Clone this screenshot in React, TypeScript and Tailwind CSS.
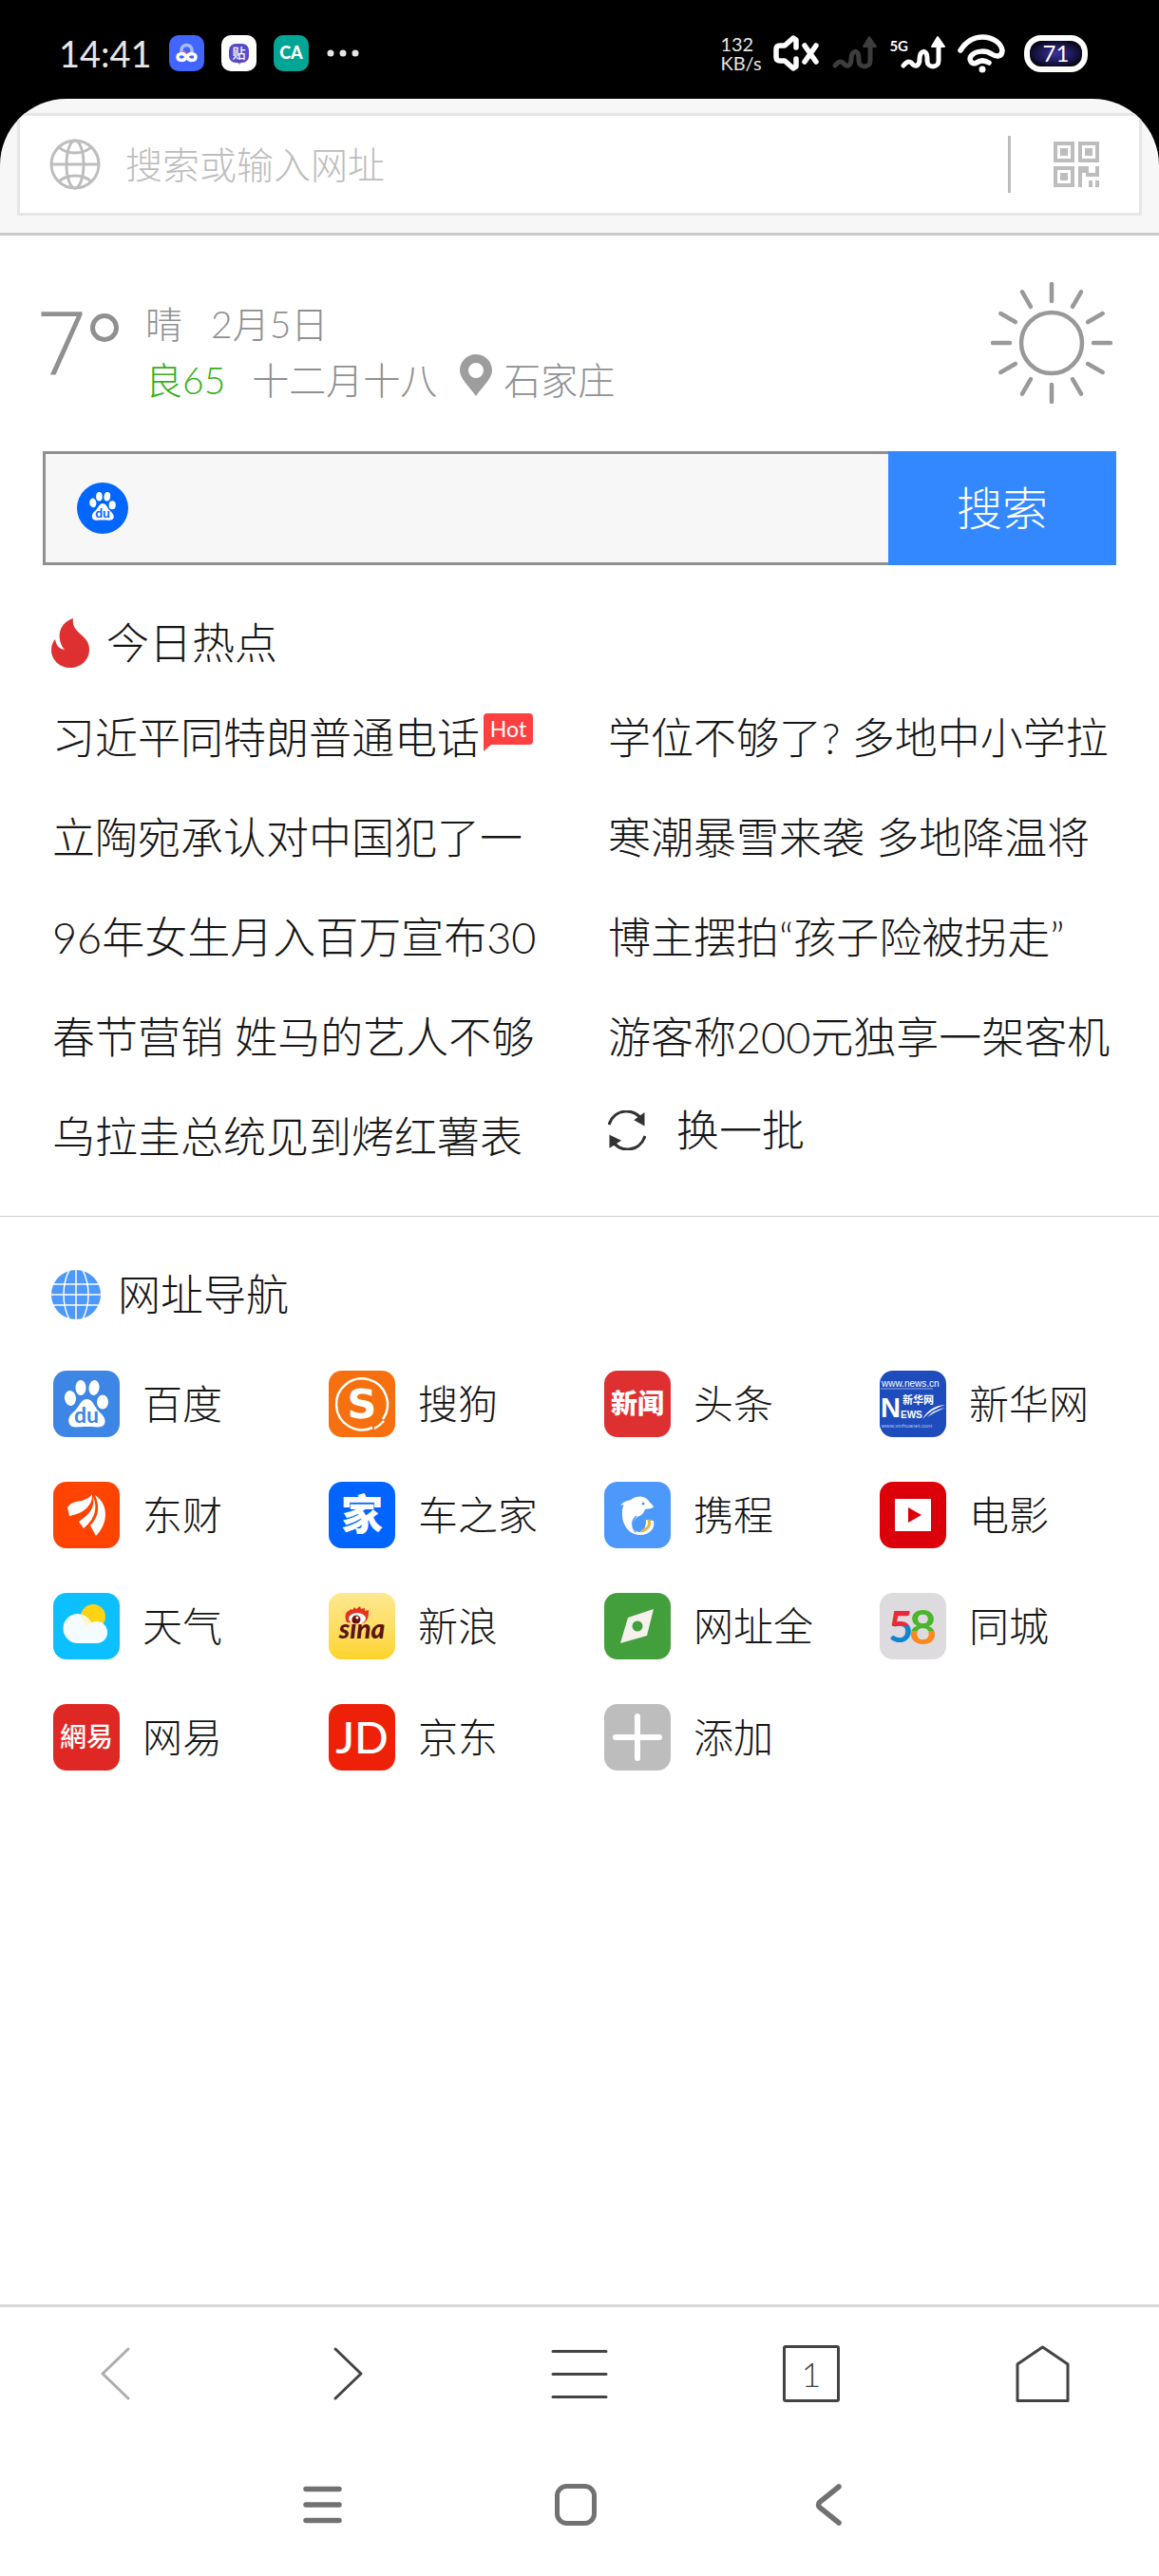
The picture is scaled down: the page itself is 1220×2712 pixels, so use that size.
import type { ReactNode } from "react";

type Site = {
  name: string;
  bg: string;
  icon: ReactNode;
};

const hotLeft = [
  "习近平同特朗普通电话",
  "立陶宛承认对中国犯了一",
  "96年女生月入百万宣布30",
  "春节营销 姓马的艺人不够",
  "乌拉圭总统见到烤红薯表",
];

const hotRight = [
  "学位不够了? 多地中小学拉",
  "寒潮暴雪来袭 多地降温将",
  "博主摆拍“孩子险被拐走”",
  "游客称200元独享一架客机",
];

function Paw({ textColor }: { textColor: string }) {
  return (
    <>
      <g fill="#fff">
        <ellipse cx="18" cy="29" rx="6" ry="8" transform="rotate(-8 18 29)" />
        <ellipse cx="29" cy="18" rx="5.5" ry="8" />
        <ellipse cx="43" cy="18" rx="5.5" ry="8" transform="rotate(8 43 18)" />
        <ellipse cx="52" cy="33" rx="6" ry="7.5" />
        <path d="M35 30c7 0 8 8 13 13 5 4 8 9 6 13-2 5-9 3-19 3s-16 2-18-3c-2-5 0-9 5-13s7-13 13-13z" />
      </g>
      <text x="35" y="55" textAnchor="middle" fontSize="23" fontFamily="Lato" fontWeight="700" fill={textColor}>
        du
      </text>
    </>
  );
}

const sites: Site[] = [
  { name: "百度", bg: "bg-[#3d86e6]", icon: <Paw textColor="#3d86e6" /> },
  {
    name: "搜狗",
    bg: "bg-[#f77010]",
    icon: (
      <>
        <path d="M46 60A27 27 0 1 1 57 51" fill="none" stroke="#fff" strokeWidth="2.5" />
        <path d="M48 61Q54 58 58 53" fill="none" stroke="#fff" strokeWidth="2.5" />
        <text x="35" y="50" textAnchor="middle" fontSize="43" fontFamily="DejaVu Sans" fontWeight="700" fill="#fff">
          S
        </text>
      </>
    ),
  },
  {
    name: "头条",
    bg: "bg-[#df3031]",
    icon: (
      <text x="35" y="45" textAnchor="middle" fontSize="28" fontFamily="Noto Sans CJK SC" fontWeight="900" fill="#fff">
        新闻
      </text>
    ),
  },
  {
    name: "新华网",
    bg: "bg-[#1f4cbd]",
    icon: (
      <g fill="#fff" fontFamily="Liberation Sans">
        <text x="2" y="17" fontSize="10">www.news.cn</text>
        <path d="M1 19h55" stroke="#8fa8e4" />
        <text x="1" y="49" fontSize="29" fontWeight="700">N</text>
        <text x="24" y="35" fontSize="11" fontWeight="700" fontFamily="Noto Sans CJK SC">新华网</text>
        <text x="22" y="50" fontSize="10" fontWeight="700">EWS</text>
        <path d="M45 51Q53 37 69 36Q55 40 45 51zM50 49Q57 41 69 39Q59 43 50 49z" />
        <text x="2" y="60" fontSize="6" fill="#b9c8ef">www.xinhuanet.com</text>
      </g>
    ),
  },
  {
    name: "东财",
    bg: "bg-[#ff4300]",
    icon: (
      <g fill="#fff">
        <path d="M41 13c1 9-6 20-24 23l-2-9c4-6 9-6 15-7 6-2 9-4 11-7z" />
        <path d="M42 16c6 13 0 25-10 33l-5-7C38 34 44 28 42 16z" />
        <path d="M44 14c15 10 14 30 1 43l-6-11c8-8 11-18 5-32z" />
      </g>
    ),
  },
  {
    name: "车之家",
    bg: "bg-[#0264ff]",
    icon: (
      <text x="35" y="51" textAnchor="middle" fontSize="44" fontFamily="Noto Sans CJK SC" fontWeight="900" fill="#fff">
        家
      </text>
    ),
  },
  {
    name: "携程",
    bg: "bg-[#4d98fb]",
    icon: (
      <>
        <path
          d="M17 25c4-5 8-5 11-6 7-5 14-4 18 0 1 2 4 4 6 7-1 3-6 2-9 3-2 7-7 7-8 8-8 6-5 14 1 16 6 0 8-6 8-13l8 1c2 8-4 15-14 15-13 0-20-12-19-25 0-4 2-5 1-7z"
          fill="#fff"
        />
        <path d="M47 40c2 6-1 10-8 12" fill="none" stroke="#e9b43a" strokeWidth="3" />
        <path d="M34 36c-6 5-5 12-1 17" fill="none" stroke="#4d98fb" strokeWidth="1.500" />
        <circle cx="41" cy="23" r="1.500" fill="#4d98fb" />
      </>
    ),
  },
  {
    name: "电影",
    bg: "bg-[#dc000a]",
    icon: (
      <>
        <rect x="16" y="18" width="38" height="34" fill="#fff" />
        <path d="M30 27v16l14-8z" fill="#dc000a" />
      </>
    ),
  },
  {
    name: "天气",
    bg: "bg-[#0cbfff]",
    icon: (
      <>
        <circle cx="42" cy="25" r="13" fill="#fdd314" />
        <path d="M26 22a16 16 0 0 1 14 9.500 11.500 11.500 0 1 1 5 21.500H26a15.500 15.500 0 0 1 0-31z" fill="#f4fcff" />
        <path d="M29 23q9 3 11 8-3 1-4 4-6-4-7-12z" fill="#fff6cd" />
      </>
    ),
  },
  {
    name: "新浪",
    bg: "bg-linear-to-b from-[#fee88e] to-[#fdd423]",
    icon: (
      <>
        <path d="M19 31c-3-7-1-11 2-12l2-2 2 1 2-3 2 2 4-3 1 3 4-1v3l4-1c0 6 0 11-6 14z" fill="#e6321e" />
        <ellipse cx="30" cy="27" rx="9" ry="6" fill="#fff" />
        <circle cx="29" cy="28" r="4.500" fill="#7c130c" />
        <circle cx="30" cy="26" r="1.500" fill="#fff" />
        <text x="35" y="48" textAnchor="middle" fontSize="28" fontFamily="Lato" fontStyle="italic" fontWeight="900" fill="#5c140b">
          sina
        </text>
      </>
    ),
  },
  {
    name: "网址全",
    bg: "bg-[#439f3b]",
    icon: (
      <>
        <path d="M52 17l-7 28-28 8 8-27z" fill="#f5f1ec" />
        <circle cx="35" cy="35" r="5.500" fill="#439f3b" />
      </>
    ),
  },
  {
    name: "同城",
    bg: "bg-[#dedbdf]",
    icon: (
      <>
        <defs>
          <linearGradient id="five" x1="0" y1="0" x2="0" y2="1">
            <stop offset="50%" stopColor="#ea2a3a" />
            <stop offset="50%" stopColor="#0d85d0" />
          </linearGradient>
          <linearGradient id="eight" x1="0" y1="0" x2="0" y2="1">
            <stop offset="58%" stopColor="#4cb52b" />
            <stop offset="58%" stopColor="#f98a1f" />
          </linearGradient>
        </defs>
        <g fontFamily="Lato" fontWeight="700">
          <text x="9" y="52" fontSize="45" fill="url(#five)">5</text>
          <text x="31" y="54" fontSize="50" fill="url(#eight)">8</text>
        </g>
      </>
    ),
  },
  {
    name: "网易",
    bg: "bg-[#df2823]",
    icon: (
      <text x="35" y="45" textAnchor="middle" fontSize="28" fontFamily="Noto Sans CJK TC" fontWeight="500" fill="#fff">
        網易
      </text>
    ),
  },
  {
    name: "京东",
    bg: "bg-[#ee2108]",
    icon: (
      <text x="35" y="52" textAnchor="middle" fontSize="47" fontFamily="Lato" fontWeight="500" fill="#fff">
        JD
      </text>
    ),
  },
  {
    name: "添加",
    bg: "bg-[#bdbdbd]",
    icon: <path d="M12 35h46M35 13v44" stroke="#fff" strokeWidth="6" strokeLinecap="round" />,
  },
];

function Signal({ color }: { color: string }) {
  return (
    <svg viewBox="0 0 48 40" className="h-10 w-12">
      <path
        d="M3 33c5-6 8-4 10-1 4 3 7 0 7-6 0-10 8-10 8-1v3c0 8 12 8 12 0V12"
        fill="none"
        stroke={color}
        strokeWidth="5"
        strokeLinecap="round"
      />
      <path d="M39 3l-6 10h13z" fill={color} stroke={color} strokeWidth="2" strokeLinejoin="round" />
    </svg>
  );
}

function StatusBar() {
  return (
    <div className="flex h-[104px] items-center justify-between bg-black pt-2 pr-[75px] pl-[62px] text-white">
      <div className="flex items-center gap-[18px]">
        <span className="text-[38px] leading-10 font-normal text-[#e6e6e6]">14:41</span>
        <svg viewBox="0 0 37 38" className="h-[38px] w-[37px]">
          <rect width="37" height="38" rx="10" fill="#4265ff" />
          <path d="M13 18v-2a5.500 5.500 0 0 1 11 0v2" fill="none" stroke="#a9bcff" strokeWidth="3.500" />
          <circle cx="16" cy="19" r="2.500" fill="#e35a8c" />
          <path d="M18.500 23c-3-5-9.500-4-9.500 0s6.500 5 9.500 0 9.500-4 9.500 0-6.500 5-9.500 0z" fill="none" stroke="#fff" strokeWidth="3.500" />
        </svg>
        <svg viewBox="0 0 37 38" className="h-[38px] w-[37px]">
          <rect width="37" height="38" rx="10" fill="#fff" />
          <path d="M16 28l3 3 3-3z" fill="#8f83f0" />
          <rect x="8" y="9" width="21" height="20" rx="7" fill="#574ac9" />
          <text x="18.500" y="24" textAnchor="middle" fontSize="14" fontFamily="Noto Sans CJK SC" fontWeight="500" fill="#fff">
            贴
          </text>
        </svg>
        <svg viewBox="0 0 37 38" className="h-[38px] w-[37px]">
          <rect width="37" height="38" rx="10" fill="#03a594" />
          <text x="18.500" y="25" textAnchor="middle" fontSize="18" fontFamily="Lato" fontWeight="900" fill="#fff">
            CA
          </text>
        </svg>
        <svg viewBox="0 0 36 8" className="h-2 w-9" fill="#e6e6e6">
          <circle cx="5" cy="4" r="3.500" />
          <circle cx="18" cy="4" r="3.500" />
          <circle cx="31" cy="4" r="3.500" />
        </svg>
      </div>
      <div className="flex items-center gap-3">
        <div className="flex w-[44px] flex-col text-[20px] leading-5 font-normal whitespace-nowrap text-[#e6e6e6]">
          <span>132</span>
          <span>KB/s</span>
        </div>
        <svg viewBox="0 0 50 40" className="h-10 w-[50px]" fill="none" stroke="#fff" strokeWidth="5.500" strokeLinecap="round" strokeLinejoin="round">
          <path d="M24 14V6l-3-2-9 8H7q-4 0-4 4v8q0 4 4 4h5l9 8 3-2v-8" />
          <path d="M33 12l12 17M45 12L33 29" />
        </svg>
        <Signal color="#3d3d3d" />
        <div className="flex">
          <span className="-mr-2 mt-1 text-[15px] leading-4 font-bold">5G</span>
          <Signal color="#fff" />
        </div>
        <svg viewBox="0 0 50 42" className="h-[42px] w-[50px]">
          <path
            d="M3 18C10 7 18 4 26 4c12 0 20 7 21 14 0 7-6 7-11 4-6-4-16-4-21 1s1 11 5 8 8-3 13 0"
            fill="none"
            stroke="#fff"
            strokeWidth="5.500"
            strokeLinecap="round"
          />
          <circle cx="26" cy="38" r="3.500" fill="#fff" />
        </svg>
        <div className="ml-2 flex h-[39px] w-[67px] items-center justify-center rounded-[18px] border-[6px] border-white bg-[radial-gradient(#3a329c,#14113d_60%,#000_85%)] text-[24px] leading-6 font-normal">
          71
        </div>
      </div>
    </div>
  );
}

function AddressBar() {
  return (
    <div className="bg-black">
      <header className="overflow-hidden rounded-t-[70px] border-b-[3px] border-[#ccc] bg-[#f7f7f7] px-[18px] pt-[15px] pb-[18px]">
        <div className="flex h-[108px] items-center border-[3px] border-[#e6e6e6] bg-white pr-[42px] pl-[31px]">
          <svg viewBox="0 0 54 54" className="size-[54px]" fill="none" stroke="#bdbdbd" strokeWidth="3">
            <circle cx="27" cy="27" r="25" />
            <ellipse cx="27" cy="27" rx="9" ry="25" />
            <path d="M2 27h50M10 9c9 8 25 8 34 0M10 45c9-8 25-8 34 0" />
          </svg>
          <input
            aria-label="搜索或输入网址"
            placeholder="搜索或输入网址"
            className="ml-[26px] min-w-0 flex-1 text-[39px] leading-[60px] outline-none placeholder:text-[#bdbdbd]"
          />
          <div className="h-[60px] w-[3px] bg-[#bdbdbd]" />
          <button type="button" aria-label="扫一扫" className="ml-[45px]">
            <svg viewBox="0 0 48 48" className="size-12" fill="#bdbdbd">
              <path fillRule="evenodd" d="M0 0h22v22H0zM4 4v14h14V4zM26 0h22v22H26zM30 4v14h14V4zM0 26h22v22H0zM4 30v14h14V30z" />
              <path d="M7 7h8v8H7zM33 7h8v8h-8zM7 33h8v8H7zM26 26h11v7h7v-7h4v11H34v-4h-4v15h-4zM37 41h4v7h-4zM44 41h4v7h-4z" />
            </svg>
          </button>
        </div>
      </header>
    </div>
  );
}

function Weather() {
  return (
    <section className="flex items-center pt-12 pr-[45px] pl-10 text-[39px] leading-[59px] text-[#8f9092]">
      <div className="font-[Roboto,sans-serif] text-[92px] leading-[118px]">7</div>
      <svg viewBox="0 0 30 30" className="ml-1 mb-9 size-[30px]">
        <circle cx="15" cy="15" r="12.500" fill="none" stroke="#8f9092" strokeWidth="5" />
      </svg>
      <div className="mt-4 ml-7 flex-1">
        <div className="flex gap-[30px]">
          <span>晴</span>
          <span>2月5日</span>
        </div>
        <div className="flex items-center">
          <span className="text-[#35b01c]">良65</span>
          <span className="ml-7">十二月十八</span>
          <svg viewBox="0 0 34 44" className="mr-3 mb-3 ml-6 h-11 w-[34px]">
            <path fillRule="evenodd" fill="#9d9d9d" d="M17 0c10 0 17 8 17 17 0 8-9 16-17 27C9 33 0 25 0 17 0 8 7 0 17 0zm0 9a8 8 0 1 0 0 16 8 8 0 0 0 0-16z" />
          </svg>
          <span>石家庄</span>
        </div>
      </div>
      <svg viewBox="-64 -64 128 128" className="mr-1 mb-1 size-32" fill="none" stroke="#999" strokeWidth="4.500" strokeLinecap="round">
        <circle r="32" />
        {[0, 30, 60, 90, 120, 150, 180, 210, 240, 270, 300, 330].map((deg) => (
          <path key={deg} d="M0-62v18" transform={`rotate(${deg})`} />
        ))}
      </svg>
    </section>
  );
}

function SearchBox() {
  return (
    <form className="mx-[45px] mt-[45px] flex h-[120px]" onSubmit={(e) => e.preventDefault()}>
      <div className="flex min-w-0 flex-1 items-center border-[3px] border-r-0 border-[#8f9092] bg-[#f7f7f7] pl-[33px]">
        <svg viewBox="0 0 54 54" className="size-[54px]">
          <circle cx="27" cy="27" r="27" fill="#0266ff" />
          <g transform="translate(6 4) scale(.6)">
            <Paw textColor="#0266ff" />
          </g>
        </svg>
        <input aria-label="百度搜索" className="ml-5 min-w-0 flex-1 bg-transparent text-[39px] outline-none" />
      </div>
      <button type="submit" className="w-60 bg-[#3388ff] text-[48px] text-white">
        搜索
      </button>
    </form>
  );
}

function HotNews() {
  return (
    <section className="border-b border-[#ccc] pt-[52px] pb-[30px] text-[45px]">
      <h2 className="flex items-center px-[54px] leading-[60px]">
        <svg viewBox="0 0 40 52" className="mr-[18px] h-[52px] w-10">
          <path
            d="M23 0c-1 8 2 11 7 16 6 5 10 9 10 17 0 11-9 19-20 19S0 44 0 33c0-5 2-9 4-11 1 6 4 10 10 11C5 22 7 5 23 0z"
            fill="#df3031"
          />
        </svg>
        今日热点
      </h2>
      <div className="mt-[18px] grid grid-cols-2 gap-x-[60px] px-[55px] leading-[105px] whitespace-nowrap">
        <ul>
          {hotLeft.map((title, index) => (
            <li key={title} className="flex">
              <a href="#">{title}</a>
              {index === 0 && (
                <span className="relative mt-[26px] ml-1 h-[33px] w-[52px] rounded-[4px] bg-[#ff4040] text-center text-[23px] leading-[32px] font-normal text-white">
                  Hot
                  <svg viewBox="0 0 8 10" className="absolute -bottom-[7px] left-0 h-[10px] w-2">
                    <path d="M0 0h8v3L0 10z" fill="#ff4040" />
                  </svg>
                </span>
              )}
            </li>
          ))}
        </ul>
        <ul>
          {hotRight.map((title) => (
            <li key={title}>
              <a href="#">{title}</a>
            </li>
          ))}
          <li>
            <button type="button" className="flex items-center gap-8 leading-[90px]">
              <svg viewBox="0 0 40 42" className="h-[42px] w-10" fill="none" stroke="#333" strokeWidth="3">
                <path d="M1 15C7-3 29-3 36 11M39 27C33 45 11 45 4 31" />
                <path d="M37 14l-7-4 7-5zM3 28l8 4-8 5z" fill="#333" />
              </svg>
              换一批
            </button>
          </li>
        </ul>
      </div>
    </section>
  );
}

function SiteNav() {
  return (
    <section className="pt-[52px]">
      <h2 className="flex items-center px-[54px] text-[45px] leading-[60px]">
        <svg viewBox="0 0 52 52" className="mr-[18px] size-[52px]">
          <circle cx="26" cy="26" r="26" fill="#4d98fb" />
          <path
            d="M26 0v52M0 26h52M2 15h48M2 37h48M19 0c-8 16-8 36 0 52M33 0c8 16 8 36 0 52"
            fill="none"
            stroke="#fff"
            strokeWidth="1.500"
          />
        </svg>
        网址导航
      </h2>
      <div className="mt-[50px] grid grid-cols-4 gap-x-[52px] gap-y-[47px] px-14">
        {sites.map((site) => (
          <a key={site.name} href="#" className="flex items-center gap-6 text-[42px] leading-[70px] whitespace-nowrap">
            <svg viewBox="0 0 70 70" className={`size-[70px] shrink-0 rounded-[14px] ${site.bg}`}>
              {site.icon}
            </svg>
            {site.name}
          </a>
        ))}
      </div>
    </section>
  );
}

function Toolbar() {
  return (
    <nav className="grid h-[143px] grid-cols-5 border-t-[3px] border-[#d8d8d8]">
      <button type="button" aria-label="后退" className="flex items-center justify-center">
        <svg viewBox="0 0 60 60" className="size-[60px]" fill="none" stroke="#adadad" strokeWidth="3" strokeLinecap="round" strokeLinejoin="round">
          <path d="M43 4L16 30l27 26" />
        </svg>
      </button>
      <button type="button" aria-label="前进" className="flex items-center justify-center">
        <svg viewBox="0 0 60 60" className="size-[60px]" fill="none" stroke="#434343" strokeWidth="3" strokeLinecap="round" strokeLinejoin="round">
          <path d="M17 4l27 26-27 26" />
        </svg>
      </button>
      <button type="button" aria-label="菜单" className="flex items-center justify-center">
        <svg viewBox="0 0 60 60" className="size-[60px]" stroke="#434343" strokeWidth="3" strokeLinecap="round">
          <path d="M2 6.500h56M2 30.500h56M2 54.500h56" />
        </svg>
      </button>
      <button type="button" aria-label="标签页" className="flex items-center justify-center">
        <span className="flex size-[60px] items-center justify-center rounded-[3px] border-[3px] border-[#434343] text-[36px] leading-9 text-[#434343]">
          1
        </span>
      </button>
      <button type="button" aria-label="主页" className="flex items-center justify-center">
        <svg viewBox="0 0 60 60" className="size-[60px]" fill="none" stroke="#434343" strokeWidth="3" strokeLinejoin="round">
          <path d="M3 20L29.500 2 56 20v38.500H3z" />
        </svg>
      </button>
    </nav>
  );
}

function SystemNav() {
  return (
    <nav className="flex h-[143px] items-center justify-center gap-[222px] pr-2 pb-2">
      <button type="button" aria-label="最近任务">
        <svg viewBox="0 0 44 44" className="size-11" stroke="#717171" strokeWidth="5.500" strokeLinecap="round">
          <path d="M4 5.500h35M4 22h35M4 38.500h35" />
        </svg>
      </button>
      <button type="button" aria-label="桌面">
        <svg viewBox="0 0 44 44" className="size-11" fill="none" stroke="#717171" strokeWidth="5">
          <rect x="2.500" y="2.500" width="39" height="39" rx="10" />
        </svg>
      </button>
      <button type="button" aria-label="返回">
        <svg viewBox="0 0 44 44" className="size-11" fill="none" stroke="#717171" strokeWidth="5.500" strokeLinecap="round">
          <path d="M33 3L13 19q-3 3 0 6l20 16" />
        </svg>
      </button>
    </nav>
  );
}

export default function App() {
  return (
    <div className="flex min-h-screen flex-col bg-white font-[Lato,'Noto_Sans_CJK_SC',sans-serif] font-light text-[#161616]">
      <StatusBar />
      <AddressBar />
      <main className="flex-1">
        <Weather />
        <SearchBox />
        <HotNews />
        <SiteNav />
      </main>
      <Toolbar />
      <SystemNav />
    </div>
  );
}
